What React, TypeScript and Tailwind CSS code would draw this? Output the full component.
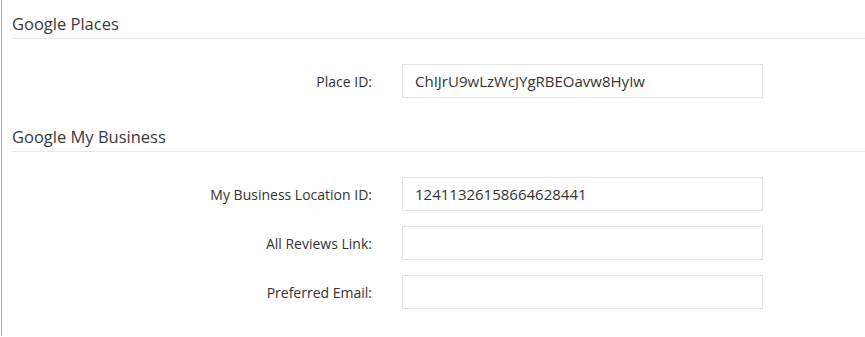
export default function App() {
  const font = { fontFamily: '"Open Sans", "Liberation Sans", sans-serif' };
  return (
    <div className="h-[337px] w-[865px] bg-white text-[#333]" style={font}>
      <div className="ml-[1px] h-[336px] border-l border-[#8fb0e8]">
        <Section title="Google Places">
          <Row label="Place ID:" value="ChIJrU9wLzWcJYgRBEOavw8HyIw" />
        </Section>
        <Section title="Google My Business">
          <Row label="My Business Location ID:" value="12411326158664628441" />
          <Row label="All Reviews Link:" value="" />
          <Row label="Preferred Email:" value="" />
        </Section>
      </div>
    </div>
  );
}

function Section({ title, children }: { title: string; children: React.ReactNode }) {
  return (
    <div className="pl-[10px] pt-[13px]">
      <h2 className="border-b border-[#e8e8e8] pb-[3px] text-[16.5px] leading-[22px] font-normal text-[#3a3a3a]">{title}</h2>
      <div className="flex flex-col gap-[15px] pt-[25px] pb-[15px]">{children}</div>
    </div>
  );
}

function Row({ label, value }: { label: string; value: string }) {
  return (
    <div className="flex items-center">
      <label className="w-[390px] pr-[30px] text-right text-[14px]">{label}</label>
      <input
        readOnly
        value={value}
        className="h-[34px] w-[361px] border border-[#e3e3e3] bg-white px-[12px] text-[15px] text-[#333] outline-none"
      />
    </div>
  );
}
